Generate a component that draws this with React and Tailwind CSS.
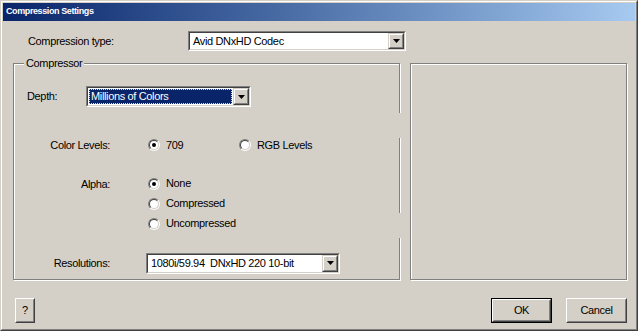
import React from 'react'

const font = { fontFamily: '"Liberation Sans", Arial, sans-serif' }

function Arrow() {
  return (
    <svg width="7" height="4" viewBox="0 0 7 4">
      <polygon points="0,0 7,0 3.5,4" fill="#000" />
    </svg>
  )
}

function Combo({ width, height, text, focused }) {
  return (
    <div
      className={`${width} ${height} border border-t-[#808080] border-l-[#808080] border-r-white border-b-white`}
    >
      <div className="h-full flex items-stretch border border-t-[#404040] border-l-[#404040] border-r-[#d4d0c8] border-b-[#d4d0c8] bg-white">
        <div className="flex-1 flex items-center p-[1px] min-w-0">
          {focused ? (
            <div className="h-full w-full flex items-center bg-[#0a246a] text-white pl-[2px] outline-1 outline-dotted outline-[#f3e08a] -outline-offset-1">
              {text}
            </div>
          ) : (
            <div className="pl-[2px] text-black whitespace-pre">{text}</div>
          )}
        </div>
        <div className="w-[16px] border border-t-[#d4d0c8] border-l-[#d4d0c8] border-r-[#404040] border-b-[#404040]">
          <div className="h-full flex items-center justify-center bg-[#d4d0c8] border border-t-white border-l-white border-r-[#808080] border-b-[#808080]">
            <Arrow />
          </div>
        </div>
      </div>
    </div>
  )
}

function Radio({ checked, label }) {
  return (
    <div className="flex items-center h-[14px]">
      <div className="w-[12px] h-[12px] rounded-full border border-t-[#808080] border-l-[#808080] border-r-white border-b-white">
        <div className="w-full h-full rounded-full border border-t-[#404040] border-l-[#404040] border-r-[#d4d0c8] border-b-[#d4d0c8] bg-white flex items-center justify-center">
          {checked && <div className="w-[4px] h-[4px] rounded-full bg-black" />}
        </div>
      </div>
      <span className="ml-[6px]">{label}</span>
    </div>
  )
}

function Button({ children, width, isDefault }) {
  const body = (
    <div className="h-full border border-t-white border-l-white border-r-[#404040] border-b-[#404040]">
      <div className="h-full flex items-center justify-center border border-t-[#d4d0c8] border-l-[#d4d0c8] border-r-[#808080] border-b-[#808080]">
        {children}
      </div>
    </div>
  )
  return (
    <div className={`${width} h-[25px] ${isDefault ? 'border border-black' : ''}`}>{body}</div>
  )
}

export default function App() {
  return (
    <div
      style={font}
      className="w-[638px] h-[331px] bg-[#d4d0c8] text-[11px] tracking-[-0.35px] text-black border border-t-[#d4d0c8] border-l-[#d4d0c8] border-r-[#404040] border-b-[#404040]"
    >
      <div className="h-full p-[1px] flex flex-col border border-t-white border-l-white border-r-[#808080] border-b-[#808080]">
        {/* title bar */}
        <div className="h-[18px] flex items-center pl-[3px] bg-linear-to-r from-[#0a246a] to-[#a6caf0] text-white font-bold text-[9px] tracking-[-0.4px]">
          Compression Settings
        </div>

        {/* compression type */}
        <div className="mt-[10px] ml-[25px] flex items-center">
          <div className="w-[160px]">Compression type:</div>
          <Combo width="w-[218px]" height="h-[20px]" text="Avid DNxHD Codec" />
        </div>

        {/* panels */}
        <div className="mt-[12px] ml-[10px] flex gap-[10px]">
          <div className="relative w-[387px] h-[217px] border border-[#808080] shadow-[inset_1px_1px_0_#fff,1px_1px_0_#fff]">
            <div className="absolute -top-[9px] left-[10px] px-[2px] bg-[#d4d0c8]">Compressor</div>
            <div className="absolute -right-[2px] top-[49px] w-[3px] h-[25px] bg-[#d4d0c8]" />
            <div className="absolute -right-[2px] top-[149px] w-[3px] h-[25px] bg-[#d4d0c8]" />

            <div className="mt-[22px] ml-[13px] flex items-center">
              <div className="w-[59px]">Depth:</div>
              <Combo width="w-[165px]" height="h-[21px]" text="Millions of Colors" focused />
            </div>

            <div className="mt-[30px] flex items-center">
              <div className="w-[96px] text-right">Color Levels:</div>
              <div className="ml-[38px] w-[91px]">
                <Radio checked label="709" />
              </div>
              <Radio label="RGB Levels" />
            </div>

            <div className="mt-[23px] flex items-start">
              <div className="w-[96px] text-right leading-[14px]">Alpha:</div>
              <div className="ml-[38px] flex flex-col gap-[6px]">
                <Radio checked label="None" />
                <Radio label="Compressed" />
                <Radio label="Uncompressed" />
              </div>
            </div>

            <div className="mt-[22px] flex items-center">
              <div className="w-[96px] text-right">Resolutions:</div>
              <div className="ml-[36px]">
                <Combo width="w-[194px]" height="h-[21px]" text="1080i/59.94  DNxHD 220 10-bit" />
              </div>
            </div>
          </div>

          <div className="w-[217px] h-[217px] border border-[#808080] shadow-[inset_1px_1px_0_#fff,1px_1px_0_#fff]" />
        </div>

        {/* buttons */}
        <div className="mt-[18px] ml-[12px] mr-[8px] flex items-center">
          <Button width="w-[20px]">?</Button>
          <div className="flex-1" />
          <Button width="w-[61px]" isDefault>OK</Button>
          <div className="w-[14px]" />
          <Button width="w-[61px]">Cancel</Button>
        </div>
      </div>
    </div>
  )
}
